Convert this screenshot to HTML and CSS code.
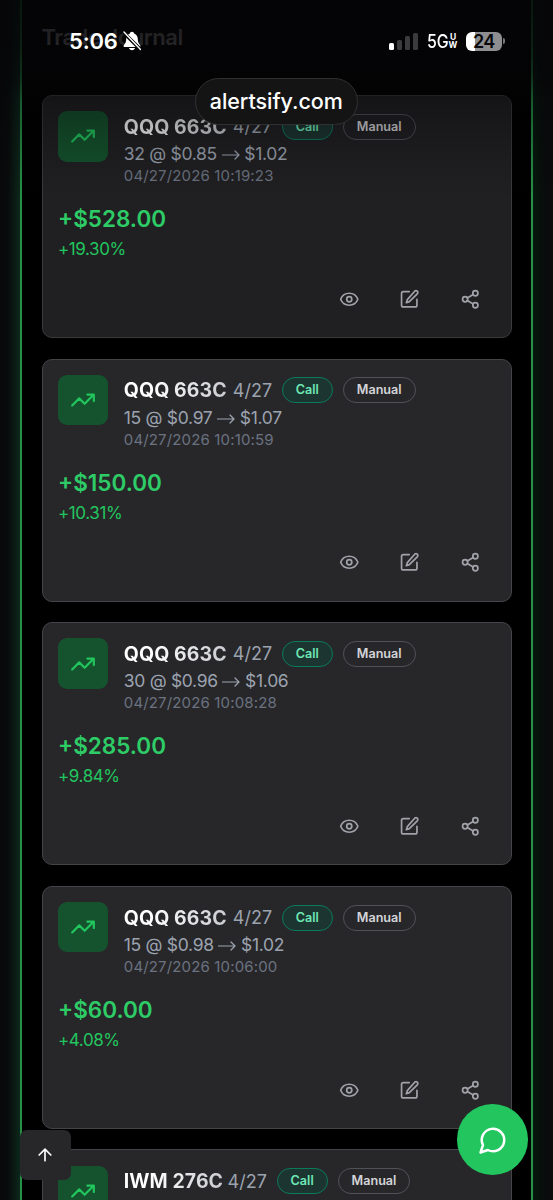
FILE: index.html
```html
<!DOCTYPE html>
<html lang="en">
<head>
<meta charset="utf-8">
<title>Trade Journal</title>
<link rel="stylesheet" href="styles.css">
</head>
<body>
<svg class="sprite" aria-hidden="true">
  <symbol id="trend" viewBox="0 0 24 24"><path d="M22 7l-8.500 8.500-5-5L2 17M16 7h6v6"/></symbol>
  <symbol id="eye" viewBox="0 0 24 24"><path d="M2.060 12.350a1 1 0 0 1 0-.7 10.750 10.750 0 0 1 19.880 0 1 1 0 0 1 0 .7 10.750 10.750 0 0 1-19.880 0"/><circle cx="12" cy="12" r="3"/></symbol>
  <symbol id="edit" viewBox="0 0 24 24"><path d="M12 3H5a2 2 0 0 0-2 2v14a2 2 0 0 0 2 2h14a2 2 0 0 0 2-2v-7"/><path d="M18.400 2.600a2.100 2.100 0 0 1 3 3l-9 9a2 2 0 0 1-.9.5l-2.900.9.9-2.900a2 2 0 0 1 .5-.9z"/></symbol>
  <symbol id="share" viewBox="0 0 24 24"><circle cx="18" cy="5" r="3"/><circle cx="6" cy="12" r="3"/><circle cx="18" cy="19" r="3"/><path d="M8.600 13.500l6.800 4M15.400 6.500l-6.800 4"/></symbol>
</svg>
<div class="screen">
  <div class="glow glow-left"></div>
  <main class="panel">
    <h1 class="heading">Trade Journal</h1>
    <section class="list">
      <article class="card card-first">
        <div class="top">
          <div class="tile"><svg><use href="#trend"/></svg></div>
          <div class="info">
            <div class="row"><b class="name">QQQ 663C</b><span class="exp">4/27</span><span class="tag call">Call</span><span class="tag">Manual</span></div>
            <div class="fill">32 @ $0.85 <svg class="to" viewBox="0 0 18 10"><path d="M0 5h17M13 1l4 4-4 4"/></svg> $1.02</div>
            <div class="time">04/27/2026 10:19:23</div>
          </div>
        </div>
        <div class="profit">+$528.00</div>
        <div class="pct">+19.30%</div>
        <div class="actions"><svg><use href="#eye"/></svg><svg><use href="#edit"/></svg><svg><use href="#share"/></svg></div>
      </article>
      <article class="card">
        <div class="top">
          <div class="tile"><svg><use href="#trend"/></svg></div>
          <div class="info">
            <div class="row"><b class="name">QQQ 663C</b><span class="exp">4/27</span><span class="tag call">Call</span><span class="tag">Manual</span></div>
            <div class="fill">15 @ $0.97 <svg class="to" viewBox="0 0 18 10"><path d="M0 5h17M13 1l4 4-4 4"/></svg> $1.07</div>
            <div class="time">04/27/2026 10:10:59</div>
          </div>
        </div>
        <div class="profit">+$150.00</div>
        <div class="pct">+10.31%</div>
        <div class="actions"><svg><use href="#eye"/></svg><svg><use href="#edit"/></svg><svg><use href="#share"/></svg></div>
      </article>
      <article class="card">
        <div class="top">
          <div class="tile"><svg><use href="#trend"/></svg></div>
          <div class="info">
            <div class="row"><b class="name">QQQ 663C</b><span class="exp">4/27</span><span class="tag call">Call</span><span class="tag">Manual</span></div>
            <div class="fill">30 @ $0.96 <svg class="to" viewBox="0 0 18 10"><path d="M0 5h17M13 1l4 4-4 4"/></svg> $1.06</div>
            <div class="time">04/27/2026 10:08:28</div>
          </div>
        </div>
        <div class="profit">+$285.00</div>
        <div class="pct">+9.84%</div>
        <div class="actions"><svg><use href="#eye"/></svg><svg><use href="#edit"/></svg><svg><use href="#share"/></svg></div>
      </article>
      <article class="card">
        <div class="top">
          <div class="tile"><svg><use href="#trend"/></svg></div>
          <div class="info">
            <div class="row"><b class="name">QQQ 663C</b><span class="exp">4/27</span><span class="tag call">Call</span><span class="tag">Manual</span></div>
            <div class="fill">15 @ $0.98 <svg class="to" viewBox="0 0 18 10"><path d="M0 5h17M13 1l4 4-4 4"/></svg> $1.02</div>
            <div class="time">04/27/2026 10:06:00</div>
          </div>
        </div>
        <div class="profit">+$60.00</div>
        <div class="pct">+4.08%</div>
        <div class="actions"><svg><use href="#eye"/></svg><svg><use href="#edit"/></svg><svg><use href="#share"/></svg></div>
      </article>
      <article class="card">
        <div class="top">
          <div class="tile"><svg><use href="#trend"/></svg></div>
          <div class="info">
            <div class="row"><b class="name name-iwm">IWM 276C</b><span class="exp">4/27</span><span class="tag call">Call</span><span class="tag">Manual</span></div>
          </div>
        </div>
      </article>
    </section>
  </main>
  <div class="glow glow-right"></div>
  <div class="shade"></div>
  <header class="status">
    <div class="clock">5:06</div>
    <svg class="bell" viewBox="0 0 18 20"><path class="solid" d="M9 .8c-1.200 0-2 .8-2.100 1.700C4.300 3.400 3.300 5.500 3.200 8c-.1 3.300-.8 4.500-2.200 5.900-.9 1-.4 2 .7 2h14.600c1.100 0 1.600-1 .7-2-1.400-1.400-2.100-2.600-2.200-5.900-.1-2.500-1.100-4.600-3.700-5.500C11 1.600 10.200.8 9 .8zM6 17h6c-.3 1.300-1.500 2.200-3 2.200S6.300 18.300 6 17z"/><path class="cut" d="M.5 1.500l17 17"/><path class="slash" d="M1 1l16.500 17.500"/></svg>
    <div class="space"></div>
    <div class="bars"><i class="b1"></i><i class="b2"></i><i class="b3"></i><i class="b4"></i></div>
    <div class="net">5G</div>
    <div class="uw"><span>U</span><span>W</span></div>
    <div class="battery">24</div>
    <div class="nub"></div>
  </header>
  <div class="url">alertsify.com</div>
  <div class="totop"><svg viewBox="0 0 24 24"><path d="M5 12l7-7 7 7M12 19V5"/></svg></div>
  <div class="chat"><svg viewBox="0 0 24 24"><path d="M7.900 20A9 9 0 1 0 4 16.100L2 22Z"/></svg></div>
</div>
</body>
</html>
```
FILE: styles.css
```css
* { box-sizing: border-box; }
body { margin: 0; background: #000; font-family: Inter, "Liberation Sans", sans-serif; }
svg { fill: none; stroke: currentColor; stroke-width: 2; stroke-linecap: round; stroke-linejoin: round; flex: none; }
.sprite { position: absolute; width: 0; height: 0; }
.screen { position: relative; display: flex; width: 553px; height: 1200px; overflow: hidden; }
.glow { width: 20px; flex: none; }
.glow-left { background: linear-gradient(90deg, #09090b 0, #080b0b 40%, #0c281b 100%); }
.glow-right { background: linear-gradient(90deg, #06190e 0, #07100b 35%, #0a0b0c 65%, #0b0b0d 100%); }
.panel { flex: 1; border: solid #259046; border-width: 0 2px; padding: 0 19.500px; background: #000; }
.heading { margin: 0; height: 95px; padding-top: 24px; font-size: 22px; line-height: 27px; font-weight: 600; letter-spacing: -0.45px; color: #a6a6aa; }
.list { display: flex; flex-direction: column; gap: 20.300px; }
.card { height: 243.300px; flex: none; padding: 15.300px 15.500px; border: 1px solid #434348; border-radius: 10px; background: #27272a; }
.card-first { background: #202022; border-color: #3b3b3e; }
.top { display: flex; gap: 15.500px; height: 86px; }
.tile { display: flex; align-items: center; justify-content: center; width: 50.300px; height: 50.300px; border-radius: 9px; background: #14532d; color: #22c55e; flex: none; }
.tile svg { width: 26px; height: 26px; }
.info { white-space: nowrap; }
.row { display: flex; align-items: center; height: 31px; }
.name { width: 109px; font-size: 19.500px; font-weight: 650; letter-spacing: 0.05px; color: transparent; background: linear-gradient(90deg, #fff 25%, #c8cacf 95%); background-clip: text; -webkit-background-clip: text; }
.name-iwm { width: 103.800px; }
.exp { width: 49px; font-size: 18px; color: #9ca3af; }
.tag { height: 26px; padding: 0 13px; border: 1px solid #515158; border-radius: 13px; font-size: 12.600px; line-height: 24px; font-weight: 600; color: #d4d4d8; }
.call { width: 51px; margin-right: 10px; border-color: #0c7a58; background: #1c3530; color: #6ee7b7; }
.fill { height: 23px; line-height: 23px; font-size: 17.500px; letter-spacing: -0.3px; color: #9ca3af; }
.to { width: 18px; height: 10px; stroke-width: 1.200; }
.time { height: 21px; line-height: 22px; font-size: 15px; letter-spacing: 0.15px; color: #6b7280; }
.profit { height: 42px; line-height: 43px; font-size: 22.500px; font-weight: 600; color: #2ecc66; }
.pct { height: 20px; line-height: 21px; font-size: 17px; letter-spacing: -0.4px; color: #22c55e; }
.actions { display: flex; justify-content: flex-end; gap: 40px; padding: 29.500px 15px 0 0; color: #a1a1aa; }
.actions svg { width: 20.500px; height: 20.500px; }
.shade { position: absolute; inset: 0 0 auto 0; height: 200px; background: linear-gradient(#050507dd 0, #050507d0 20%, #050507b0 38%, #05050760 52%, #05050738 70%, #05050718 85%, #05050700 100%); }
.status { position: absolute; left: 0; top: 26px; width: 553px; height: 30px; padding: 0 48px 0 69px; display: flex; align-items: center; color: #fff; }
.clock { width: 49px; font-size: 22px; font-weight: 600; letter-spacing: -0.2px; }
.bell { width: 18px; height: 20px; margin-left: 5px; }
.bell .solid { fill: #fff; stroke: none; }
.bell .cut { stroke: #08080a; stroke-width: 3.500; }
.bell .slash { stroke-width: 1.400; }
.space { flex: 1; }
.bars { display: flex; align-items: flex-end; gap: 3px; height: 18px; margin-right: 9px; }
.bars i { width: 4.800px; border-radius: 1.500px; background: #3b3b3d; }
.bars .b1 { height: 7px; background: #fff; }
.bars .b2 { height: 10px; }
.bars .b3 { height: 14px; }
.bars .b4 { height: 17px; }
.net { width: 22px; font-size: 18.500px; font-weight: 550; transform: scaleX(0.86); transform-origin: left center; }
.uw { display: flex; flex-direction: column; align-items: center; width: 9px; font-size: 8.500px; line-height: 8px; font-weight: 700; }
.battery { width: 36.500px; height: 19px; margin-left: 8px; border-radius: 6px; background: linear-gradient(90deg, #fff 9px, #8e8e90 9px); color: #08080a; font-size: 18px; line-height: 19px; font-weight: 600; letter-spacing: -0.6px; text-align: center; }
.nub { width: 2px; height: 6px; margin-left: 1px; border-radius: 0 2px 2px 0; background: #77777a; }
.url { position: absolute; left: 194.500px; top: 78px; width: 163.500px; height: 47px; border: 1px solid #303031; border-radius: 24px; background: #141415; color: #fff; font-size: 21.500px; line-height: 45px; font-weight: 500; letter-spacing: -0.05px; text-align: center; }
.totop { position: absolute; left: 20px; top: 1130px; width: 50.500px; height: 50px; border-radius: 7px; background: #27272a; color: #fff; display: grid; place-items: center; }
.totop svg { width: 20px; height: 20px; }
.chat { position: absolute; left: 457.300px; top: 1104.300px; width: 70.500px; height: 70.500px; border-radius: 50%; background: #22c55e; color: #fff; display: grid; place-items: center; }
.chat svg { width: 30px; height: 30px; }
```
